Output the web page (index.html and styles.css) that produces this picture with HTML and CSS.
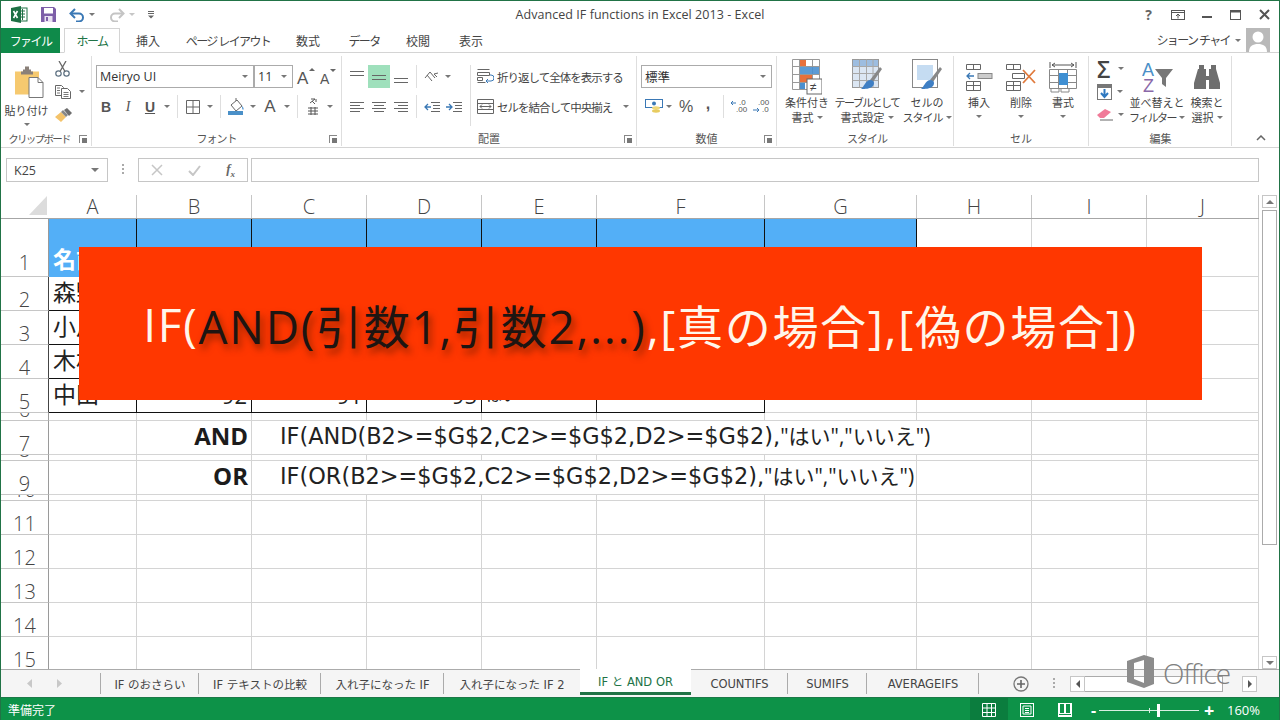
FILE: index.html
```html
<!DOCTYPE html>
<html lang="ja">
<head>
  <meta charset="UTF-8">
  <title>Advanced IF functions in Excel 2013 - Excel</title>
  <link rel="stylesheet" href="styles.css">
</head>
<body>
<div class="window">

  <!-- Title bar -->
  <div class="titlebar">
    <div class="qat">
      <span class="qat-btn w30"><svg width="17" height="17" viewBox="0 0 17 17"><rect x="7" y="2" width="9" height="13" fill="#fff" stroke="#1d7044"/><path d="M9 5h5M9 8h5M9 11h5M11.5 3v11" stroke="#1d7044"/><path d="M0 2l10-2v17L0 15z" fill="#1d7044"/><path d="M2.5 5l4 7M6.5 5l-4 7" stroke="#fff" stroke-width="1.6"/></svg></span>
      <span class="qat-btn w28"><svg width="15" height="15" viewBox="0 0 15 15"><path d="M0 0h13l2 2v13H0z" fill="#7d5ea8"/><rect x="3" y="1" width="9" height="5.5" fill="#fff"/><rect x="3.5" y="9" width="8" height="6" fill="#e9e2f2"/><rect x="5" y="10" width="2" height="4" fill="#7d5ea8"/></svg></span>
      <span class="qat-btn w22 ml4"><svg width="16" height="14" viewBox="0 0 16 14"><path d="M3 5.5h7a4 4 0 0 1 0 8H7" fill="none" stroke="#3a78b5" stroke-width="2"/><path d="M6 1L1.5 5.5 6 10" fill="none" stroke="#3a78b5" stroke-width="2"/></svg></span>
      <span class="qat-caret"></span>
      <span class="qat-btn w22 ml10"><svg width="16" height="14" viewBox="0 0 16 14"><path d="M13 5.5H6a4 4 0 0 0 0 8h3" fill="none" stroke="#c4c4c4" stroke-width="2"/><path d="M10 1l4.500 4.500L10 10" fill="none" stroke="#c4c4c4" stroke-width="2"/></svg></span>
      <span class="qat-caret light"></span>
      <span class="qat-btn w14 ml8"><svg width="8" height="9" viewBox="0 0 8 9"><path d="M1 1.500h6M1 3.500h6" stroke="#666"/><path d="M1 5.500h6L4 8.500z" fill="#666"/></svg></span>
    </div>
    <div class="doc-title">Advanced IF functions in Excel 2013 - Excel</div>
    <div class="win-btns">
      <span class="win-btn help">?</span>
      <span class="win-btn"><svg width="14" height="10" viewBox="0 0 14 10"><rect x=".5" y=".5" width="13" height="9" fill="none" stroke="#555"/><path d="M0 2.500h14" stroke="#555"/><path d="M7 8.500V4M5 6l2-2 2 2" fill="none" stroke="#555"/></svg></span>
      <span class="win-btn"><svg width="10" height="10" viewBox="0 0 10 10"><path d="M0 7h10" stroke="#555" stroke-width="2"/></svg></span>
      <span class="win-btn"><svg width="11" height="10" viewBox="0 0 11 10"><rect x=".5" y=".5" width="10" height="9" fill="none" stroke="#555"/><path d="M0 1.500h11" stroke="#555" stroke-width="2"/></svg></span>
      <span class="win-btn"><svg width="11" height="11" viewBox="0 0 11 11"><path d="M1 1l9 9M10 1l-9 9" stroke="#555" stroke-width="2"/></svg></span>
    </div>
  </div>

  <!-- Ribbon tabs -->
  <div class="tabrow">
    <div class="file-tab kana">ファイル</div>
    <div class="ribbon-tabs">
      <span class="rtab active kana">ホーム</span>
      <span class="rtab">挿入</span>
      <span class="rtab kana">ページ レイアウト</span>
      <span class="rtab">数式</span>
      <span class="rtab kana">データ</span>
      <span class="rtab">校閲</span>
      <span class="rtab">表示</span>
    </div>
    <div class="user">
      <span class="kana">ショーン チャイ</span>
      <span class="caret user-caret"></span>
      <svg class="avatar" width="24" height="24" viewBox="0 0 24 24"><rect width="24" height="24" fill="#b9b9b9"/><circle cx="12" cy="9" r="5.500" fill="#fff"/><path d="M3 24c0-6 4-8 9-8s9 2 9 8z" fill="#fff"/></svg>
    </div>
  </div>

  <!-- Ribbon -->
  <div class="ribbon">

    <div class="group">
      <div class="group-body clip-body">
        <div class="big paste">
          <svg class="paste-icon" width="30" height="31" viewBox="0 0 30 31"><rect x="1" y="5" width="24" height="23" fill="#f6c96f"/><path d="M9 5V3h2V0h4v3h2v2h2v3H7V5z" fill="#8a8079"/><path d="M15 11h9l5 5v15H15z" fill="#fff" stroke="#777"/><path d="M24 11v5h5" fill="none" stroke="#777"/></svg>
          <span class="big-label paste-label">貼り付け</span>
          <span class="caret"></span>
        </div>
        <div class="small-col">
          <span class="small-row"><svg width="15" height="16" viewBox="0 0 15 16"><circle cx="3.500" cy="12.500" r="2.700" fill="none" stroke="#5b6f80" stroke-width="1.200"/><circle cx="11.500" cy="12.500" r="2.700" fill="none" stroke="#5b6f80" stroke-width="1.200"/><path d="M5 10.500L11 0M10 10.500L4 0" stroke="#666" stroke-width="1.300"/></svg></span>
          <span class="small-row"><svg width="16" height="14" viewBox="0 0 16 14"><path d="M.5.500h6l2 2v8h-8z" fill="#fff" stroke="#666"/><path d="M6.500 3.500h6l3 3v7h-9z" fill="#fff" stroke="#666"/><path d="M2 3h3M2 5.500h3M2 8h3M8.500 7.500h5M8.500 9.500h5M8.500 11.500h5" stroke="#777"/></svg><span class="caret ml8"></span></span>
          <span class="small-row"><svg width="17" height="14" viewBox="0 0 17 14"><path d="M0 9l6-5 5 5-5 5z" fill="#f4c36a"/><path d="M6 4l5 5 2-2-5-5z" fill="#888"/><path d="M9 2l3-2 5 5-3 3z" fill="#6e6e6e"/></svg></span>
        </div>
      </div>
      <div class="group-label clip-label">クリップボード</div>
      <span class="launcher"></span>
    </div>

    <div class="group">
      <div class="group-body stack font-body">
        <div class="tool-row">
          <div class="combo font-combo"><span>Meiryo UI</span><span class="caret"></span></div>
          <div class="combo size-combo"><span>11</span><span class="caret"></span></div>
          <span class="tool w21"><svg width="21" height="20" viewBox="0 0 21 20"><text x="2" y="17" class="ico-a big-a">A</text><path d="M14 4l3-3 3 3z" fill="#666"/></svg></span>
          <span class="tool w21"><svg width="21" height="20" viewBox="0 0 21 20"><text x="4" y="17" class="ico-a small-a">A</text><path d="M14 2l3 3 3-3z" fill="#666"/></svg></span>
        </div>
        <div class="tool-row">
          <span class="tool fmt bold">B</span>
          <span class="tool fmt ital">I</span>
          <span class="tool fmt under">U</span>
          <span class="tool-caret"></span>
          <span class="sep"></span>
          <span class="tool"><svg width="14" height="14" viewBox="0 0 14 14"><path d="M.5.500h13v13H.5zM7 .5v13M.5 7h13" fill="none" stroke="#666"/></svg></span>
          <span class="tool-caret"></span>
          <span class="sep"></span>
          <span class="tool"><svg width="17" height="17" viewBox="0 0 17 17"><path d="M3 7l6-5 5 6-6 5z" fill="#fff" stroke="#666"/><path d="M8 3V0" stroke="#666"/><path d="M14 8c2 2 2 3 1 4-1-1-1-2-1-4z" fill="#5a9bd5"/><rect y="13" width="15" height="4" fill="#4a90c8"/></svg></span>
          <span class="tool-caret"></span>
          <span class="tool fmt color-a">A</span>
          <span class="tool-caret"></span>
          <span class="sep"></span>
          <span class="tool"><svg width="12" height="17" viewBox="0 0 12 17"><path d="M4 1h4L3 5" fill="none" stroke="#555"/><path d="M5 3l3 3M9 1v3" stroke="#555"/><path d="M1 10h10M1 13h10M1 16h10M4 9v8M8 9v8" stroke="#555"/></svg></span>
          <span class="tool-caret"></span>
        </div>
      </div>
      <div class="group-label kana-s">フォント</div>
      <span class="launcher"></span>
    </div>

    <div class="group">
      <div class="group-body align-body">
        <div class="align-left stack">
          <div class="tool-row">
            <span class="tool"><svg width="14" height="14" viewBox="0 0 14 14"><path d="M0 1.500h14M0 5.500h14" stroke="#666"/></svg></span>
            <span class="tool on"><svg width="14" height="14" viewBox="0 0 14 14"><path d="M0 5.500h14M0 9.500h14" stroke="#666"/></svg></span>
            <span class="tool"><svg width="14" height="14" viewBox="0 0 14 14"><path d="M0 8.500h14M0 12.500h14" stroke="#666"/></svg></span>
            <span class="sep"></span>
            <span class="tool"><svg width="16" height="14" viewBox="0 0 16 14"><path d="M1 8l5-6 5 6M3 5l5 6M14 3l-4 1 3 3" fill="none" stroke="#666"/></svg></span>
            <span class="tool-caret narrow"></span>
          </div>
          <div class="tool-row">
            <span class="tool"><svg width="14" height="12" viewBox="0 0 14 12"><path d="M0 1.500h14M0 4.500h10M0 7.500h14M0 10.500h10" stroke="#666"/></svg></span>
            <span class="tool"><svg width="14" height="12" viewBox="0 0 14 12"><path d="M0 1.500h14M2 4.500h10M0 7.500h14M2 10.500h10" stroke="#666"/></svg></span>
            <span class="tool"><svg width="14" height="12" viewBox="0 0 14 12"><path d="M0 1.500h14M4 4.500h10M0 7.500h14M4 10.500h10" stroke="#666"/></svg></span>
            <span class="sep"></span>
            <span class="tool"><svg width="16" height="12" viewBox="0 0 16 12"><path d="M7 1.500h9M9 4.500h7M9 7.500h7M7 10.500h9" stroke="#666"/><path d="M7 6H1M4 3L1 6l3 3" fill="none" stroke="#3a78b5" stroke-width="1.300"/></svg></span>
            <span class="tool"><svg width="16" height="12" viewBox="0 0 16 12"><path d="M7 1.500h9M9 4.500h7M9 7.500h7M7 10.500h9" stroke="#666"/><path d="M0 6h6M3 3l3 3-3 3" fill="none" stroke="#3a78b5" stroke-width="1.300"/></svg></span>
          </div>
        </div>
        <div class="align-right stack">
          <div class="tool-row wide-row">
            <svg width="17" height="15" viewBox="0 0 17 15"><path d="M.5.500h12M.5 3.500h12v3H.5zM.5 8.500h5v3h-5zM.5 13.500h8" fill="none" stroke="#666"/><path d="M10 12h4a2 2 0 0 0 0-6h-1M11 10l-2 2 2 2" fill="none" stroke="#3a78b5"/></svg>
            <span class="wide-text">折り返して全体を表示する</span>
          </div>
          <div class="tool-row wide-row">
            <svg width="17" height="15" viewBox="0 0 17 15"><path d="M.5.500h16v14H.5zM.5 4.500h16M.5 10.500h16" fill="none" stroke="#666"/><path d="M3 7.500h11M5 5.500l-2 2 2 2M12 5.500l2 2-2 2" fill="none" stroke="#666"/></svg>
            <span class="wide-text">セルを結合して中央揃え</span>
            <span class="caret merge-caret"></span>
          </div>
        </div>
      </div>
      <div class="group-label">配置</div>
      <span class="launcher"></span>
    </div>

    <div class="group">
      <div class="group-body stack number-body">
        <div class="tool-row">
          <div class="combo number-combo"><span>標準</span><span class="caret"></span></div>
        </div>
        <div class="tool-row">
          <span class="tool"><svg width="18" height="15" viewBox="0 0 18 15"><rect x=".5" y=".5" width="17" height="8" fill="#fff" stroke="#3a78b5"/><circle cx="9" cy="4.500" r="2" fill="#3a78b5"/><ellipse cx="11" cy="9" rx="4" ry="1.700" fill="#f0d878"/><ellipse cx="11" cy="12" rx="4" ry="1.700" fill="#e8cc60"/></svg></span>
          <span class="tool-caret tiny"></span>
          <span class="tool fmt percent">%</span>
          <span class="tool fmt comma">,</span>
          <span class="sep"></span>
          <span class="tool"><svg width="17" height="15" viewBox="0 0 17 15"><text x="8" y="6" class="ico-dec">.0</text><text x="5" y="13" class="ico-dec">.00</text><path d="M5 4H0M2 2L0 4l2 2" fill="none" stroke="#3a78b5"/></svg></span>
          <span class="tool"><svg width="17" height="15" viewBox="0 0 17 15"><text x="5" y="6" class="ico-dec">.00</text><text x="9" y="13" class="ico-dec">.0</text><path d="M0 11h6M4 9l2 2-2 2" fill="none" stroke="#3a78b5"/></svg></span>
        </div>
      </div>
      <div class="group-label">数値</div>
      <span class="launcher"></span>
    </div>

    <div class="group">
      <div class="group-body big-row">
        <div class="big w60">
          <svg width="30" height="36" viewBox="0 0 30 36"><path d="M.5.500h27v30H.5zM7.500.5v30M20.500.5v30M.5 7.500h27M.5 15.500h27M.5 23.500h27" fill="none" stroke="#999"/><rect x="8" y="1" width="6" height="6" fill="#e8713c"/><rect x="8" y="8" width="19" height="7" fill="#4a90d0" opacity=".9"/><rect x="8" y="16" width="12" height="7" fill="#e8713c"/><rect x="8" y="24" width="5" height="6" fill="#4a90d0"/><rect x="15" y="20" width="15" height="15" fill="#fff" stroke="#666"/><text x="18" y="32" class="ico-ne">≠</text></svg>
          <span class="big-label">条件付き</span>
          <span class="big-label">書式<i class="caret"></i></span>
        </div>
        <div class="big w60">
          <svg width="30" height="36" viewBox="0 0 30 36"><rect x=".5" y=".5" width="26" height="28" fill="#fff" stroke="#999"/><rect x="1" y="1" width="25" height="6" fill="#9dbde0"/><rect x="1" y="7" width="25" height="21" fill="#dbe6f3"/><path d="M7.500.5v28M14.500.5v28M21 .5v28M.5 7.500h26M.5 14.500h26M.5 21.500h26" fill="none" stroke="#a8a8a8"/><path d="M28 8l2 2-9 13-3-2z" fill="#888"/><path d="M18 21c4 0 5 3 3 6-3 3-8 3-12 3 3-2 4-8 9-9z" fill="#3f7fc4"/></svg>
          <span class="big-label kana">テーブルとして</span>
          <span class="big-label">書式設定<i class="caret"></i></span>
        </div>
        <div class="big w60">
          <svg width="30" height="36" viewBox="0 0 30 36"><rect x=".5" y=".5" width="25" height="28" fill="#fff" stroke="#888"/><rect x="5" y="6" width="16" height="15" fill="#c5dcf2"/><path d="M28 8l2 2-9 13-3-2z" fill="#888"/><path d="M18 21c4 0 5 3 3 6-3 3-8 3-12 3 3-2 4-8 9-9z" fill="#3f7fc4"/></svg>
          <span class="big-label">セルの</span>
          <span class="big-label kana-s">スタイル<i class="caret"></i></span>
        </div>
      </div>
      <div class="group-label kana-s">スタイル</div>
    </div>

    <div class="group">
      <div class="group-body big-row">
        <div class="big w42">
          <svg width="27" height="28" viewBox="0 0 27 28"><path d="M.5 1.500h14v5H.5zM7.500 1.500v5M.5 18.500h14v9H.5zM.5 22.500h14M7.500 18.500v9" fill="none" stroke="#666"/><rect x="12" y="10.500" width="14" height="5" fill="#ccc" stroke="#888"/><path d="M8 13H1M4 10l-3 3 3 3" fill="none" stroke="#3a78b5" stroke-width="1.300"/></svg>
          <span class="big-label">挿入</span>
          <span class="caret"></span>
        </div>
        <div class="big w42">
          <svg width="30" height="28" viewBox="0 0 30 28"><path d="M.5 1.500h14v5H.5zM7.500 1.500v5M.5 18.500h14v9H.5zM.5 22.500h14M7.500 18.500v9M6.500 10.500h12v5h-12z" fill="none" stroke="#666"/><path d="M17 7l12 13M29 7L17 20" stroke="#e07a3c" stroke-width="1.800"/></svg>
          <span class="big-label">削除</span>
          <span class="caret"></span>
        </div>
        <div class="big w42">
          <svg width="28" height="32" viewBox="0 0 28 32"><path d="M1 1v6M27 1v6M3 4h22M6 2L3 4l3 2M22 2l3 2-3 2" fill="none" stroke="#555"/><path d="M.5 8.500h27v19H.5zM9.500 8.500v19M18.500 8.500v19M.5 14.500h27M.5 21.500h27" fill="none" stroke="#888"/><rect x="10" y="12" width="9" height="12" fill="#3f8fd2"/><path d="M2 28v3h8v-3M12 28v3h8v-3" fill="none" stroke="#888"/></svg>
          <span class="big-label">書式</span>
          <span class="caret"></span>
        </div>
      </div>
      <div class="group-label">セル</div>
    </div>

    <div class="group">
      <div class="group-body">
        <div class="small-col edit-col">
          <span class="small-row"><span class="sigma">Σ</span><span class="caret ml5"></span></span>
          <span class="small-row"><svg width="15" height="16" viewBox="0 0 15 16"><rect x=".5" y=".5" width="14" height="15" fill="#fff" stroke="#777"/><rect x="1" y="1" width="13" height="3" fill="#777"/><path d="M7.500 5v8M4 9l3.500 4L11 9" fill="none" stroke="#2f78c0" stroke-width="2"/></svg><span class="caret ml5"></span></span>
          <span class="small-row"><svg width="16" height="13" viewBox="0 0 16 13"><path d="M0 7l8-6 6 3-7 6H3z" fill="#f07a98"/><path d="M3 12h13" stroke="#666"/></svg><span class="caret ml5"></span></span>
        </div>
        <div class="big w50">
          <svg width="31" height="32" viewBox="0 0 31 32"><text x="0" y="15" class="ico-sort blue">A</text><text x="1" y="31" class="ico-sort purple">Z</text><path d="M13 8h18l-7 9v9l-4-3v-6z" fill="#777"/></svg>
          <span class="big-label">並べ替えと</span>
          <span class="big-label kana">フィルター<i class="caret"></i></span>
        </div>
        <div class="big w50">
          <svg width="27" height="26" viewBox="0 0 27 26"><path d="M5 1h5v4h2v7h3V5h2V1h5v4l4 14v6H15v-9h-3v9H0v-6L4 5h1z" fill="#6e6e6e"/></svg>
          <span class="big-label">検索と</span>
          <span class="big-label">選択<i class="caret"></i></span>
        </div>
      </div>
      <div class="group-label">編集</div>
    </div>

    <div class="collapse"><svg width="10" height="6" viewBox="0 0 10 6"><path d="M1 5l4-4 4 4" fill="none" stroke="#666" stroke-width="1.500"/></svg></div>
  </div>

  <!-- Formula bar -->
  <div class="formula-bar">
    <div class="name-box"><span>K25</span><span class="caret"></span></div>
    <span class="grip"></span>
    <div class="fx-box">
      <svg width="12" height="12" viewBox="0 0 12 12"><path d="M1 1l10 10M11 1L1 11" stroke="#c6c6c6" stroke-width="1.500"/></svg>
      <svg width="13" height="11" viewBox="0 0 13 11"><path d="M1 6l4 4 7-9" fill="none" stroke="#c6c6c6" stroke-width="2"/></svg>
      <span class="fx">f<sub>x</sub></span>
    </div>
    <div class="formula-input"></div>
  </div>

  <!-- Sheet -->
  <div class="sheet-area">
    <div class="sheet">
      <div class="row col-heads">
        <div class="cell corner"><svg width="18" height="19" viewBox="0 0 18 19"><path d="M18 0v19H0z" fill="#dcdcdc"/></svg></div>
        <div class="cell">A</div><div class="cell">B</div><div class="cell">C</div><div class="cell">D</div><div class="cell">E</div><div class="cell">F</div><div class="cell">G</div><div class="cell">H</div><div class="cell">I</div><div class="cell">J</div>
      </div>
      <div class="row h58 head-row">
        <div class="cell rh">1</div>
        <div class="cell bl name-head">名前</div><div class="cell bl"></div><div class="cell bl"></div><div class="cell bl"></div><div class="cell bl"></div><div class="cell bl"></div><div class="cell bl"></div>
        <div class="cell"></div><div class="cell"></div><div class="cell"></div>
      </div>
      <div class="row h34">
        <div class="cell rh tb-left">2</div>
        <div class="cell tb name">森野</div><div class="cell tb"></div><div class="cell tb"></div><div class="cell tb"></div><div class="cell tb"></div><div class="cell tb"></div>
        <div class="cell"></div><div class="cell"></div><div class="cell"></div><div class="cell"></div>
      </div>
      <div class="row h34">
        <div class="cell rh tb-left">3</div>
        <div class="cell tb name">小川</div><div class="cell tb"></div><div class="cell tb"></div><div class="cell tb"></div><div class="cell tb"></div><div class="cell tb"></div>
        <div class="cell"></div><div class="cell"></div><div class="cell"></div><div class="cell"></div>
      </div>
      <div class="row h34">
        <div class="cell rh tb-left">4</div>
        <div class="cell tb name">木村</div><div class="cell tb"></div><div class="cell tb"></div><div class="cell tb"></div><div class="cell tb"></div><div class="cell tb"></div>
        <div class="cell"></div><div class="cell"></div><div class="cell"></div><div class="cell"></div>
      </div>
      <div class="row h34">
        <div class="cell rh tb-left">5</div>
        <div class="cell tb name">中田</div><div class="cell tb num">92</div><div class="cell tb num">91</div><div class="cell tb num">95</div><div class="cell tb name small-name">はい</div><div class="cell tb"></div>
        <div class="cell"></div><div class="cell"></div><div class="cell"></div><div class="cell"></div>
      </div>
      <div class="row h8">
        <div class="cell rh">6</div>
        <div class="cell"></div><div class="cell"></div><div class="cell"></div><div class="cell"></div><div class="cell"></div><div class="cell"></div><div class="cell"></div><div class="cell"></div><div class="cell"></div><div class="cell"></div>
      </div>
      <div class="row h34">
        <div class="cell rh">7</div>
        <div class="cell"></div><div class="cell label">AND</div>
        <div class="cell formula span6">IF(AND(B2&gt;=$G$2,C2&gt;=$G$2,D2&gt;=$G$2),<span class="formula-ja">"はい","いいえ")</span></div>
        <div class="cell"></div><div class="cell"></div>
      </div>
      <div class="row h6">
        <div class="cell rh">8</div>
        <div class="cell"></div><div class="cell"></div><div class="cell"></div><div class="cell"></div><div class="cell"></div><div class="cell"></div><div class="cell"></div><div class="cell"></div><div class="cell"></div><div class="cell"></div>
      </div>
      <div class="row h34">
        <div class="cell rh">9</div>
        <div class="cell"></div><div class="cell label">OR</div>
        <div class="cell formula span5">IF(OR(B2&gt;=$G$2,C2&gt;=$G$2,D2&gt;=$G$2),<span class="formula-ja">"はい","いいえ")</span></div>
        <div class="cell"></div><div class="cell"></div><div class="cell"></div>
      </div>
      <div class="row h6">
        <div class="cell rh">10</div>
        <div class="cell"></div><div class="cell"></div><div class="cell"></div><div class="cell"></div><div class="cell"></div><div class="cell"></div><div class="cell"></div><div class="cell"></div><div class="cell"></div><div class="cell"></div>
      </div>
      <div class="row h34">
        <div class="cell rh">11</div>
        <div class="cell"></div><div class="cell"></div><div class="cell"></div><div class="cell"></div><div class="cell"></div><div class="cell"></div><div class="cell"></div><div class="cell"></div><div class="cell"></div><div class="cell"></div>
      </div>
      <div class="row h34">
        <div class="cell rh">12</div>
        <div class="cell"></div><div class="cell"></div><div class="cell"></div><div class="cell"></div><div class="cell"></div><div class="cell"></div><div class="cell"></div><div class="cell"></div><div class="cell"></div><div class="cell"></div>
      </div>
      <div class="row h34">
        <div class="cell rh">13</div>
        <div class="cell"></div><div class="cell"></div><div class="cell"></div><div class="cell"></div><div class="cell"></div><div class="cell"></div><div class="cell"></div><div class="cell"></div><div class="cell"></div><div class="cell"></div>
      </div>
      <div class="row h34">
        <div class="cell rh">14</div>
        <div class="cell"></div><div class="cell"></div><div class="cell"></div><div class="cell"></div><div class="cell"></div><div class="cell"></div><div class="cell"></div><div class="cell"></div><div class="cell"></div><div class="cell"></div>
      </div>
      <div class="row h34">
        <div class="cell rh">15</div>
        <div class="cell"></div><div class="cell"></div><div class="cell"></div><div class="cell"></div><div class="cell"></div><div class="cell"></div><div class="cell"></div><div class="cell"></div><div class="cell"></div><div class="cell"></div>
      </div>
    </div>
    <div class="vscroll">
      <span class="sb-btn"><i class="tri-up"></i></span>
      <span class="sb-thumb"></span>
      <span class="sb-btn down"><i class="tri-down"></i></span>
    </div>
  </div>

  <!-- Sheet tabs -->
  <div class="sheet-tabs">
    <div class="tab-nav">
      <svg width="6" height="9" viewBox="0 0 6 9"><path d="M5 0v9L0 4.500z" fill="#c8c8c8"/></svg>
      <svg width="6" height="9" viewBox="0 0 6 9"><path d="M1 0v9l5-4.500z" fill="#c8c8c8"/></svg>
    </div>
    <div class="tabs">
      <span class="tab">IF のおさらい</span>
      <span class="tab">IF テキストの比較</span>
      <span class="tab">入れ子になった IF</span>
      <span class="tab pre-active">入れ子になった IF 2</span>
      <span class="tab active">IF と AND OR</span>
      <span class="tab">COUNTIFS</span>
      <span class="tab">SUMIFS</span>
      <span class="tab">AVERAGEIFS</span>
    </div>
    <div class="add-sheet"><svg width="16" height="16" viewBox="0 0 16 16"><circle cx="8" cy="8" r="7" fill="none" stroke="#777" stroke-width="1.300"/><path d="M8 4v8M4 8h8" stroke="#666" stroke-width="1.600"/></svg></div>
    <span class="grip tab-grip"></span>
    <div class="hscroll">
      <span class="hs-btn"><i class="tri-left"></i></span>
      <span class="hs-thumb"></span>
      <span class="hs-gap"></span>
      <span class="hs-btn"><i class="tri-right"></i></span>
    </div>
  </div>

  <!-- Status bar -->
  <div class="statusbar">
    <span class="status-text">準備完了</span>
    <div class="status-right">
      <span class="view on"><svg width="14" height="14" viewBox="0 0 14 14"><path d="M.5.500h13v13H.5zM5 .5v13M9.500.5v13M.5 5h13M.5 9.500h13" fill="none" stroke="#fff"/></svg></span>
      <span class="view"><svg width="14" height="14" viewBox="0 0 14 14"><rect x=".5" y=".5" width="13" height="13" fill="none" stroke="#fff"/><path d="M3 3h8v8H3zM5 5.500h4M5 7.500h4M5 9.500h4" fill="none" stroke="#fff"/></svg></span>
      <span class="view"><svg width="14" height="14" viewBox="0 0 14 14"><rect width="14" height="14" fill="#fff"/><rect x="2" y="1" width="4" height="9" fill="#0d9248"/><rect x="8" y="1" width="4" height="9" fill="#0d9248"/><rect x="1" y="11" width="12" height="1" fill="#0d9248"/></svg></span>
      <span class="zoom-minus">-</span>
      <span class="zoom-slider"><i class="zoom-tick"></i><i class="zoom-thumb"></i></span>
      <span class="zoom-plus">+</span>
      <span class="zoom-val">160%</span>
    </div>
  </div>

  <!-- Overlay banner -->
  <div class="banner"><span class="lit">IF(</span><span class="dim">AND(引数1,引数2,...)</span><span class="lit">,[真の場合],[偽の場合])</span></div>

  <!-- Office watermark -->
  <div class="office">
    <svg width="27" height="33" viewBox="0 0 27 33"><path fill-rule="evenodd" d="M0 6L17 0l10 3v26l-10 4L0 27zM17 5L7 8v16l10 4z" fill="#8c8c8c"/></svg>
    <span class="office-text">Office</span>
  </div>
</div>
</body>
</html>
```

FILE: styles.css
```css
* {
  box-sizing: border-box;
}

body {
  margin: 0;
  background: #fff;
  font-family: "Open Sans", "Noto Sans CJK JP", sans-serif;
  color: #444;
}

.window {
  position: relative;
  width: 1280px;
  height: 720px;
  overflow: hidden;
  display: flex;
  flex-direction: column;
  background: #fff;
  border: 1px solid #217346;
  border-bottom: none;
}

/* Small shared bits */
.caret {
  display: inline-block;
  width: 0;
  height: 0;
  border-left: 3px solid transparent;
  border-right: 3px solid transparent;
  border-top: 3px solid #777;
  flex: none;
}

.kana { letter-spacing: -1.6px; }
.kana-s { letter-spacing: -1px; }

.ml4 { margin-left: 4px; }
.ml5 { margin-left: 5px; }
.ml8 { margin-left: 8px; }
.ml10 { margin-left: 10px; }
.w14 { width: 14px; }
.w21 { width: 21px; }
.w22 { width: 22px; }
.w28 { width: 28px; }
.w30 { width: 30px; }

/* Title bar */
.titlebar {
  height: 27px;
  flex: none;
  display: grid;
  grid-template-columns: 1fr auto 1fr;
  align-items: center;
}

.qat {
  display: flex;
  align-items: center;
  padding-left: 3px;
}

.qat-btn {
  display: flex;
  justify-content: center;
  align-items: center;
}

.qat-caret {
  width: 0;
  height: 0;
  margin: 0 1px;
  border-left: 3px solid transparent;
  border-right: 3px solid transparent;
  border-top: 3px solid #777;
}

.qat-caret.light {
  border-top-color: #c6c6c6;
}

.doc-title {
  font-size: 12.5px;
  letter-spacing: .05px;
  color: #444;
}

.win-btns {
  display: flex;
  justify-content: flex-end;
}

.win-btn {
  width: 29px;
  height: 20px;
  display: flex;
  justify-content: center;
  align-items: center;
}

.help {
  font-size: 14px;
  font-weight: 700;
  color: #666;
}

/* Ribbon tabs */
.tabrow {
  height: 25px;
  flex: none;
  display: flex;
  position: relative;
  border-bottom: 1px solid #d4d4d4;
  font-size: 12px;
}

.file-tab {
  width: 59px;
  height: 25px;
  background: #0f8a4a;
  color: #fff;
  display: flex;
  justify-content: center;
  align-items: center;
}

.ribbon-tabs {
  margin-left: 4px;
  display: grid;
  grid-template-columns: 56px 56px 104px 56px 56px 52px 54px;
}

.rtab {
  height: 25px;
  display: flex;
  justify-content: center;
  align-items: center;
  white-space: nowrap;
}

.rtab.active {
  background: #fff;
  border: 1px solid #d4d4d4;
  border-bottom: 1px solid #fff;
  color: #217346;
}

.user {
  margin-left: auto;
  padding-right: 9px;
  display: flex;
  align-items: center;
}

.user-caret {
  margin: 0 5px;
}

.avatar {
  margin-top: -1px;
}

/* Ribbon */
.ribbon {
  height: 95px;
  flex: none;
  display: grid;
  grid-template-columns: 91px 250px 295px 140px 177px 135px 143px 1fr;
  border-bottom: 1px solid #d4d4d4;
}

.group {
  position: relative;
  display: grid;
  grid-template-rows: 76px 1fr;
  margin: 3px 0 1px;
  border-right: 1px solid #dedede;
}

.group-body {
  display: flex;
}

.group-label {
  font-size: 11px;
  line-height: 14px;
  text-align: center;
  color: #555;
}

.clip-label {
  font-size: 10.5px;
  letter-spacing: -1.7px;
  padding-right: 14px;
  white-space: nowrap;
}

.launcher {
  position: absolute;
  right: 4px;
  bottom: 3px;
  width: 8px;
  height: 8px;
  border-left: 1px solid #888;
  border-top: 1px solid #888;
}

.launcher::after {
  content: "";
  position: absolute;
  right: 0;
  bottom: 0;
  width: 5px;
  height: 5px;
  background: #777;
}

.stack {
  display: flex;
  flex-direction: column;
  gap: 7px;
  padding-top: 9px;
}

.tool-row {
  height: 23px;
  display: flex;
  align-items: center;
}

.tool {
  width: 22px;
  height: 23px;
  flex: none;
  display: flex;
  justify-content: center;
  align-items: center;
}

.tool.w21 {
  width: 21px;
}

.tool.on {
  background: #9fe0bc;
}

.tool-caret {
  width: 12px;
  height: 23px;
  flex: none;
  display: flex;
  justify-content: center;
  align-items: center;
}

.tool-caret::after {
  content: "";
  border-left: 3px solid transparent;
  border-right: 3px solid transparent;
  border-top: 3px solid #777;
}

.tool-caret.narrow {
  width: 10px;
}

.tool-caret.tiny {
  width: 8px;
  margin-right: 2px;
}

.sep {
  width: 1px;
  height: 23px;
  margin: 0 4px;
  flex: none;
  background: #dedede;
}

.fmt {
  font-family: "Liberation Sans", sans-serif;
  font-size: 14px;
  color: #555;
}

.bold {
  font-weight: 700;
}

.ital {
  font-style: italic;
  font-family: "Liberation Serif", serif;
}

.under {
  font-weight: 700;
  text-decoration: underline;
}

.color-a {
  font-size: 17px;
  font-weight: 400;
}

.percent {
  font-size: 16px;
}

.comma {
  font-size: 16px;
  font-weight: 700;
  padding-bottom: 6px;
}

.combo {
  height: 23px;
  flex: none;
  display: flex;
  align-items: center;
  justify-content: space-between;
  padding: 0 5px 0 3px;
  border: 1px solid #ababab;
  font-size: 12.5px;
  color: #333;
}

.font-body {
  padding-left: 3px;
}

.font-combo {
  width: 158px;
  margin-left: 1px;
}

.size-combo {
  width: 39px;
}

.size-combo + .tool {
  margin-left: 2px;
}

.number-body {
  padding-left: 6px;
}

.number-combo {
  width: 131px;
  margin-left: -2px;
}

/* Clipboard */
.clip-body {
  gap: 0;
}

.paste {
  width: 51px;
  padding-top: 5px;
}

.big > .paste-icon {
  margin-left: 5px;
}

.paste-label {
  margin-top: 3px;
}

.small-col {
  display: flex;
  flex-direction: column;
  padding-top: 1px;
}

.small-row {
  height: 23px;
  display: flex;
  align-items: center;
  padding-left: 3px;
}

.edit-col {
  width: 43px;
  padding-left: 5px;
}

.sigma {
  font-size: 23px;
  line-height: 20px;
  font-weight: 600;
  color: #444;
  width: 16px;
}

/* Big buttons */
.big {
  display: flex;
  flex-direction: column;
  align-items: center;
  flex: none;
}

.big > svg {
  height: 36px;
  padding-top: 3px;
  box-sizing: content-box;
}

.big > .caret {
  margin-top: 5px;
}

.big-row {
  justify-content: center;
}

.w60 { width: 60px; }
.w42 { width: 42px; }
.w50 { width: 50px; }

.big-label {
  font-size: 11px;
  line-height: 15px;
  white-space: nowrap;
  color: #444;
  display: flex;
  align-items: center;
  gap: 3px;
}

/* Alignment */
.align-body {
  padding-left: 4px;
}

.align-left {
  width: 124px;
  flex: none;
}

.align-right {
  border-left: 1px solid #dedede;
  margin: 9px 0 6px;
  padding: 0 0 0 6px;
}

.wide-row {
  gap: 3px;
}

.wide-text {
  font-size: 11.5px;
  letter-spacing: -1px;
  white-space: nowrap;
  color: #444;
}

.merge-caret {
  margin-left: 8px;
}

/* SVG text */
.ico-a {
  font-family: "Liberation Sans", sans-serif;
  fill: #555;
}

.big-a { font-size: 17px; }
.small-a { font-size: 14px; }

.ico-dec {
  font-family: "Liberation Sans", sans-serif;
  font-size: 8px;
  fill: #555;
}

.ico-ne {
  font-family: "Liberation Sans", sans-serif;
  font-size: 12px;
  fill: #444;
}

.ico-sort {
  font-family: "Liberation Sans", sans-serif;
  font-size: 18px;
}

.blue { fill: #4a90c8; }
.purple { fill: #8a68a8; }

.collapse {
  display: flex;
  justify-content: flex-end;
  align-items: flex-end;
  padding: 0 13px 6px 0;
}

/* Formula bar */
.formula-bar {
  height: 47px;
  flex: none;
  display: flex;
  align-items: flex-start;
  padding: 10px 20px 0 5px;
}

.name-box {
  width: 102px;
  height: 24px;
  display: flex;
  align-items: center;
  justify-content: space-between;
  padding: 0 8px 0 7px;
  border: 1px solid #c6c6c6;
  font-size: 12.5px;
}

.name-box .caret {
  border-left-width: 4px;
  border-right-width: 4px;
  border-top-width: 4px;
}

.grip {
  width: 2px;
  height: 11px;
  flex: none;
  margin: 6px 14px 0;
  background: repeating-linear-gradient(#aaa 0 2px, transparent 2px 4px);
}

.fx-box {
  width: 110px;
  height: 24px;
  display: flex;
  align-items: center;
  justify-content: space-between;
  padding: 0 12px;
  border: 1px solid #c6c6c6;
}

.fx {
  font-family: "Liberation Serif", serif;
  font-style: italic;
  font-weight: 700;
  font-size: 13px;
  line-height: 13px;
  color: #666;
  margin-top: -3px;
}

.fx sub {
  font-size: 9px;
  line-height: 0;
}

.formula-input {
  flex: 1;
  height: 24px;
  margin-left: 3px;
  border: 1px solid #c6c6c6;
}

/* Sheet */
.sheet-area {
  height: 474px;
  flex: none;
  display: flex;
}

.sheet {
  width: 1258px;
  height: 474px;
  flex: none;
  overflow: hidden;
}

.row {
  display: grid;
  grid-template-columns: 48px 88px 115px 115px 115px 115px 168px 152px 115px 115px 112px;
  overflow: hidden;
}

.cell {
  min-width: 0;
  display: flex;
  align-items: flex-end;
  overflow: hidden;
  white-space: nowrap;
  border-right: 1px solid #d4d4d4;
  border-bottom: 1px solid #d4d4d4;
  color: #222;
}

.col-heads {
  height: 24px;
  overflow: visible;
  border-bottom: 1px solid #a6a6a6;
}

.col-heads .cell {
  overflow: visible;
  border-bottom: none;
  border-right-color: #c6c6c6;
  justify-content: center;
  align-items: center;
  font-size: 20px;
  font-weight: 300;
  line-height: 23px;
  color: #444;
}

.col-heads .cell.corner {
  justify-content: flex-end;
  align-items: flex-start;
  padding: 1px 2px 0 0;
  border-right: none;
}

.h58 { height: 58px; }
.h34 { height: 34px; }
.h8 { height: 8px; }
.h6 { height: 6px; }

.rh {
  justify-content: center;
  font-size: 20px;
  font-weight: 300;
  line-height: 20px;
  color: #444;
  border-right-color: #9a9a9a;
  border-bottom-color: #c6c6c6;
}

.head-row .rh {
  padding-bottom: 3px;
}

.tb-left {
  border-right-color: #444;
}

.bl {
  background: #53aff7;
  border-right-color: #111;
  border-bottom-color: #53aff7;
}

.name-head {
  font-size: 23px;
  font-weight: 700;
  color: #fff;
  padding: 0 0 1px 4px;
}

.tb {
  border-right-color: #111;
  border-bottom-color: #111;
}

.name {
  font-size: 23px;
  line-height: 30px;
  padding: 0 0 3px 4px;
}

.small-name {
  font-size: 16px;
  padding-bottom: 2px;
}

.num {
  font-size: 22px;
  line-height: 30px;
  justify-content: flex-end;
  padding: 0 4px 2px 0;
}

.label {
  font-size: 24px;
  font-weight: 700;
  line-height: 30px;
  justify-content: flex-end;
  padding: 0 3px 3px 0;
  color: #1c1c1c;
}

.span5 {
  grid-column: span 5;
}

.span6 {
  grid-column: span 6;
}

.formula {
  font-family: "DejaVu Sans", "Noto Sans CJK JP", sans-serif;
  font-size: 22.4px;
  line-height: 30px;
  padding: 0 0 3px 28px;
  color: #222;
}

.formula-ja {
  font-family: "Open Sans", "Noto Sans CJK JP", sans-serif;
  font-size: 21px;
}

/* Vertical scrollbar */
.vscroll {
  width: 21px;
  flex: none;
  display: flex;
  flex-direction: column;
  padding: 0 3px;
}

.sb-btn {
  width: 15px;
  height: 13px;
  flex: none;
  display: flex;
  justify-content: center;
  align-items: center;
  border: 1px solid #c6c6c6;
}

.sb-btn.down {
  margin-top: auto;
  margin-bottom: 0;
}

.sb-thumb {
  height: 335px;
  margin-top: 2px;
  border: 1px solid #ababab;
}

.tri-up, .tri-down {
  border-left: 4px solid transparent;
  border-right: 4px solid transparent;
}

.tri-up { border-bottom: 4px solid #777; }
.tri-down { border-top: 4px solid #777; }

/* Sheet tabs */
.sheet-tabs {
  height: 28px;
  flex: none;
  display: flex;
  align-items: stretch;
  background: #f5f5f5;
  border-top: 1px solid #ababab;
}

.tab-nav {
  width: 100px;
  flex: none;
  display: flex;
  align-items: center;
  gap: 23px;
  padding-left: 26px;
  border-right: 1px solid #ababab;
  margin: 3px 0;
}

.tabs {
  display: grid;
  grid-template-columns: 98px 122px 123px 136px 111px 97px 79px 112px;
  font-family: "DejaVu Sans", "Noto Sans CJK JP", sans-serif;
  font-size: 11.5px;
}

.tab {
  display: flex;
  justify-content: center;
  align-items: center;
  white-space: nowrap;
  position: relative;
  color: #444;
}

.tab::after {
  content: "";
  position: absolute;
  right: 0;
  top: 3px;
  bottom: 3px;
  width: 1px;
  background: #ababab;
}

.tab.pre-active::after,
.tab.active::after {
  display: none;
}

.tab.active {
  background: #fff;
  margin-top: -1px;
  color: #217346;
  border-bottom: 3px solid #217346;
  margin-bottom: 2px;
}

.add-sheet {
  width: 84px;
  flex: none;
  display: flex;
  justify-content: center;
  align-items: center;
}

.tab-grip {
  margin: 8px 0 0 -10px;
}

.hscroll {
  margin: 6px 0 5px 15px;
  width: 187px;
  flex: none;
  display: flex;
}

.hs-btn {
  width: 15px;
  flex: none;
  display: flex;
  justify-content: center;
  align-items: center;
  border: 1px solid #c6c6c6;
  background: #fff;
}

.hs-thumb {
  flex: 1;
  border: 1px solid #ababab;
  border-left: none;
  background: #fff;
}

.hs-gap {
  width: 19px;
  flex: none;
}

.tri-left, .tri-right {
  border-top: 4px solid transparent;
  border-bottom: 4px solid transparent;
}

.tri-left { border-right: 4px solid #555; }
.tri-right { border-left: 4px solid #555; }

/* Status bar */
.statusbar {
  flex: 1;
  display: flex;
  align-items: center;
  justify-content: space-between;
  padding-left: 7px;
  background: #0d9248;
  color: #fff;
  font-size: 12px;
  border-top: 1px solid #1c7a48;
}

.status-right {
  height: 100%;
  display: flex;
  align-items: center;
}

.view {
  width: 38px;
  height: 100%;
  display: flex;
  justify-content: center;
  align-items: center;
}

.view.on {
  background: #0b7d3e;
}

.zoom-minus {
  margin-left: 7px;
  width: 8px;
  font-size: 16px;
  font-weight: 700;
}

.zoom-slider {
  position: relative;
  width: 100px;
  height: 1px;
  background: #d7efe2;
}

.zoom-tick {
  position: absolute;
  left: 50px;
  top: -2px;
  width: 1px;
  height: 5px;
  background: #d7efe2;
}

.zoom-thumb {
  position: absolute;
  left: 58px;
  top: -6px;
  width: 3px;
  height: 13px;
  background: #fff;
}

.zoom-plus {
  margin: 0 0 0 5px;
  width: 12px;
  font-size: 18px;
  font-weight: 700;
}

.zoom-val {
  margin: 0 19px 0 11px;
  font-size: 13px;
}

/* Overlay banner */
.banner {
  position: absolute;
  left: 78px;
  top: 246px;
  width: 1123px;
  height: 153px;
  display: flex;
  justify-content: center;
  align-items: center;
  background: #ff3700;
  font-size: 46px;
  font-weight: 400;
  letter-spacing: 1.7px;
  white-space: nowrap;
}

.lit {
  color: #fff6ea;
}

.dim {
  color: #1d1512;
  text-shadow: 3px 5px 7px rgba(60, 20, 0, .55);
}

/* Office watermark */
.office {
  position: absolute;
  left: 1126px;
  top: 654px;
  display: flex;
  align-items: flex-start;
  gap: 9px;
}

.office-text {
  font-size: 28px;
  font-weight: 300;
  letter-spacing: -1px;
  color: #808080;
  line-height: 36px;
}
```
